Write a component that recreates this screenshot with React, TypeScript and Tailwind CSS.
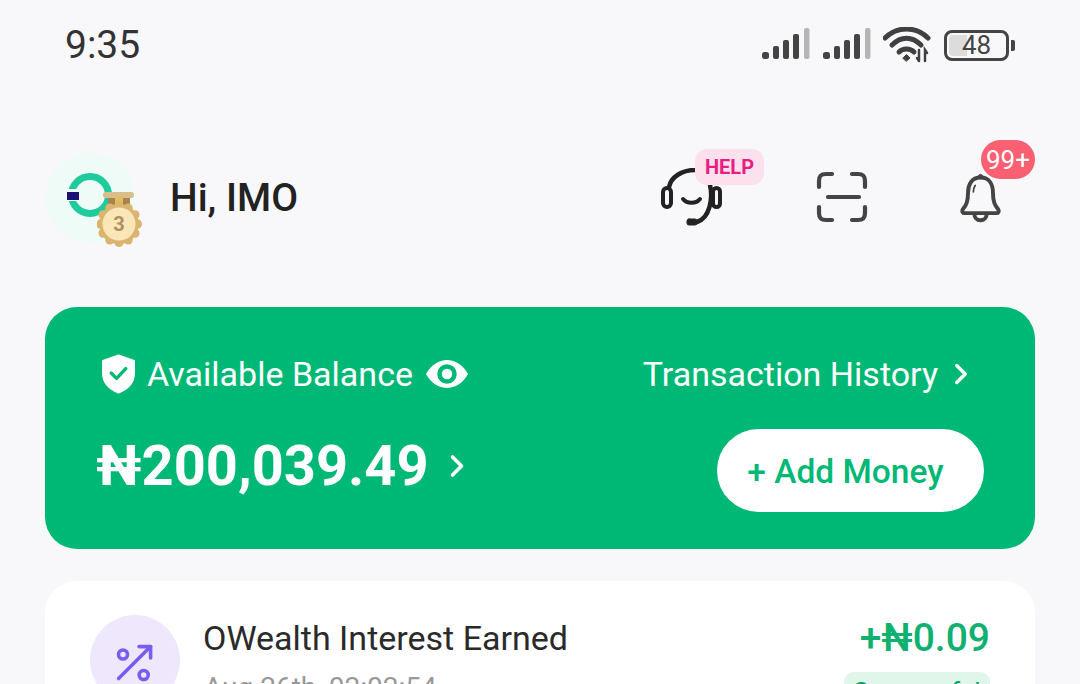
import { ChevronRight } from "lucide-react";

const scallops = [0, 30, 60, 90, 120, 150, 180, 210, 240, 270, 300, 330];

function Signal() {
  return (
    <svg width="48" height="34" viewBox="0 0 48 34">
      <rect x="0" y="24" width="7" height="7" rx="2.5" fill="#444" />
      <rect x="11" y="18" width="6" height="13" rx="2" fill="#444" />
      <rect x="21" y="12" width="6" height="19" rx="2" fill="#444" />
      <rect x="31" y="6" width="6" height="25" rx="2" fill="#444" />
      <rect x="42" y="0" width="5.5" height="31" rx="2" fill="#b5b5b5" />
    </svg>
  );
}

function Wifi() {
  return (
    <svg width="48" height="36" viewBox="0 0 48 36" fill="none" stroke="#404040" strokeLinecap="round">
      <path d="M2 11C14 -1 33 -1 45 11" strokeWidth="5" />
      <path d="M9 18C18 9 29 9 38 18" strokeWidth="5" />
      <path d="M16 25C20 21 27 21 31 25" strokeWidth="5" />
      <path d="M20 31L23.5 27.5L27 31L23.5 34Z" fill="#404040" strokeWidth="1" />
      <path d="M36 23V34M34 31L36 34M42 34V23L44 26" strokeWidth="2.5" />
    </svg>
  );
}

function Avatar() {
  return (
    <div className="relative h-[90px] w-[90px] rounded-full bg-[#effbf6]">
      <svg className="absolute left-0 top-0" width="90" height="90" viewBox="0 0 90 90" fill="none">
        <circle cx="45" cy="42" r="18.5" stroke="#1fcb9c" strokeWidth="7" />
        <rect x="21" y="36" width="14" height="12" fill="#effbf6" />
        <rect x="22" y="39" width="12" height="8" fill="#1d0f74" />
      </svg>
      <svg className="absolute left-[52px] top-[38px]" width="46" height="58" viewBox="0 0 46 58">
        <rect x="6" y="1" width="31" height="6" rx="3" fill="#d9bd8a" />
        <rect x="11" y="7" width="22" height="12" fill="#a68450" />
        <rect x="18" y="7" width="8" height="12" fill="#e8bd4a" />
        <circle cx="22" cy="33" r="20" fill="#d9b56f" />
        {scallops.map((deg) => (
          <circle
            key={deg}
            cx={22 + 18.5 * Math.cos((deg * Math.PI) / 180)}
            cy={33 + 18.5 * Math.sin((deg * Math.PI) / 180)}
            r="4.5"
            fill="#d9b56f"
          />
        ))}
        <circle cx="22" cy="33" r="16.5" fill="#fbe6b8" />
        <text x="22" y="40" textAnchor="middle" fontFamily="Roboto, sans-serif" fontWeight="700" fontSize="20" fill="#b09060">3</text>
      </svg>
    </div>
  );
}

export default function App() {
  return (
    <div className="h-[684px] w-[1080px] overflow-hidden bg-[#f8f8fb] font-['Roboto',sans-serif]">
      {/* status bar */}
      <div className="flex h-[90px] items-center justify-between pl-[65px] pr-[65px]">
        <span className="text-[39px] font-normal leading-none text-[#333]">9:35</span>
        <div className="flex items-center">
          <Signal />
          <div className="ml-[13px]"><Signal /></div>
          <div className="ml-[12px]"><Wifi /></div>
          <div className="relative ml-[13px] flex h-[31px] w-[65px] items-center rounded-[8px] border-[3px] border-[#444] p-[2px]">
            <div className="h-full w-[18px] rounded-l-[4px] bg-[#dcdcdc]" />
            <span className="absolute inset-0 flex items-center justify-center text-[26px] leading-none text-[#444]">48</span>
          </div>
          <div className="ml-[2px] h-[11px] w-[4px] rounded-r-[2px] bg-[#444]" />
        </div>
      </div>

      {/* header */}
      <div className="mt-[63px] flex h-[90px] items-center px-[45px]">
        <Avatar />
        <span className="ml-[35px] text-[39px] font-medium leading-none text-[#222]">Hi, IMO</span>
        <div className="relative ml-auto h-[90px] w-[370px]">
          <svg className="absolute left-[-5px] top-[15px]" width="64" height="62" viewBox="0 0 64 62" fill="none" stroke="#222" strokeLinecap="round">
            <path d="M9 19C11 9 22 2 35 2" strokeWidth="4.5" />
            <path d="M50 17C53 30 50 50 37 54" strokeWidth="4.5" />
            <rect x="3" y="20" width="8" height="19" rx="4" strokeWidth="4" />
            <rect x="53" y="20" width="7" height="19" rx="3.5" strokeWidth="4" />
            <path d="M23 31C27 36 36 36 40 31" strokeWidth="4" />
            <rect x="27" y="51" width="10" height="6" rx="2" fill="#222" strokeWidth="1" />
          </svg>
          <span className="absolute left-[30px] top-[-4px] flex h-[36px] w-[69px] items-center justify-center rounded-[12px] bg-[#fde0ee] text-[20px] font-bold leading-none text-[#e91e80]">HELP</span>
          <svg className="absolute left-[150px] top-[17px]" width="54" height="54" viewBox="0 0 54 54" fill="none" stroke="#444" strokeWidth="4.2" strokeLinecap="round">
            <path d="M17 4H11C6 4 4 6 4 11V17" />
            <path d="M37 4H43C48 4 50 6 50 11V17" />
            <path d="M4 37V43C4 48 6 50 11 50H17" />
            <path d="M50 37V43C50 48 48 50 43 50H37" />
            <path d="M13 27H44" />
          </svg>
          <svg className="absolute left-[295px] top-[19px]" width="41" height="52" viewBox="0 0 46 56" fill="none" stroke="#444" strokeWidth="4.4" strokeLinejoin="round">
            <path d="M23 5C33 5 37 13 37 22C37 32 39 36 43 41C44 43 43 45 41 45H5C3 45 2 43 3 41C7 36 9 32 9 22C9 13 13 5 23 5Z" />
            <path d="M16 45C16 50 19 53 23 53C27 53 30 50 30 45" />
            <circle cx="23" cy="4" r="2.5" fill="#444" strokeWidth="1" />
            <path d="M17 14C15 17 15 19 15 21" stroke="#444" strokeWidth="2" strokeLinecap="round" />
          </svg>
          <span className="absolute left-[316px] top-[-13px] flex h-[39px] w-[54px] items-center justify-center rounded-full bg-[#fa5f72] text-[26px] leading-none text-white">99+</span>
        </div>
      </div>

      {/* balance card */}
      <div className="mx-[45px] mt-[64px] flex h-[242px] flex-col rounded-[32px] bg-[#00b876] pl-[52px] pr-[51px] text-white">
        <div className="mt-[44px] flex h-[46px] items-center justify-between">
          <div className="flex items-center">
            <svg className="ml-[4px]" width="35" height="40" viewBox="0 0 36 40">
              <path d="M18 1L34 6.5V19C34 29 27 35.5 18 39C9 35.5 2 29 2 19V6.5Z" fill="#fff" stroke="#fff" strokeWidth="2" strokeLinejoin="round" />
              <path d="M10.5 19L16 24.5L25.5 14.5" fill="none" stroke="#00b876" strokeWidth="3.5" strokeLinecap="round" strokeLinejoin="round" />
            </svg>
            <span className="ml-[11px] text-[34px] leading-none">Available Balance</span>
            <svg className="ml-[13px]" width="42" height="28" viewBox="0 0 42 28">
              <path d="M0 14C5 5 13 0 21 0C29 0 37 5 42 14C37 23 29 28 21 28C13 28 5 23 0 14Z" fill="#fff" />
              <circle cx="21" cy="14" r="7.5" fill="none" stroke="#00b876" strokeWidth="4.5" />
            </svg>
          </div>
          <div className="flex items-center">
            <span className="text-[34px] leading-none">Transaction History</span>
            <ChevronRight className="ml-[6px] mr-[6px]" size={34} strokeWidth={2.4} />
          </div>
        </div>
        <div className="mt-[32px] flex items-center justify-between">
          <div className="mb-[10px] flex items-center">
            <span className="-ml-[1px] text-[56px] font-bold leading-none">₦200,039.49</span>
            <ChevronRight className="ml-[10px]" size={36} strokeWidth={2.4} />
          </div>
          <div className="flex h-[83px] w-[267px] items-center justify-center rounded-full bg-white pr-[10px] pt-[2px] text-[33.5px] font-medium leading-none text-[#00b876]">+ Add Money</div>
        </div>
      </div>

      {/* transaction */}
      <div className="mx-[45px] mt-[32px] flex h-[200px] rounded-[32px] bg-white pl-[45px] pr-[45px] pt-[34px]">
        <div className="flex h-[90px] w-[90px] items-center justify-center rounded-full bg-[#efe8fd]">
          <svg className="mt-[6px]" width="40" height="40" viewBox="0 0 40 40" fill="none" stroke="#7c5cf0" strokeWidth="3.6" strokeLinecap="round" strokeLinejoin="round">
            <path d="M3.6 35.6L35.6 3.6" />
            <path d="M24 3.6H35.6V15" />
            <circle cx="8" cy="11.5" r="4.5" />
            <circle cx="28.7" cy="32" r="4.5" />
          </svg>
        </div>
        <div className="ml-[24px] flex flex-col">
          <span className="mt-[3px] -ml-[1px] text-[34px] leading-[40px] text-[#2a2a2a]">OWealth Interest Earned</span>
          <span className="mt-[14px] text-[28px] leading-[32px] text-[#999]">Aug 26th, 02:02:54</span>
        </div>
        <div className="ml-auto flex flex-col items-end">
          <span className="mt-[1px] text-[39px] font-medium leading-[44px] text-[#0fb070]">+₦0.09</span>
          <span className="mt-[12px] flex h-[40px] w-[146px] items-center justify-center rounded-[10px] bg-[#e0f6ea] text-[26px] leading-none text-[#00a060]">Successful</span>
        </div>
      </div>
    </div>
  );
}
